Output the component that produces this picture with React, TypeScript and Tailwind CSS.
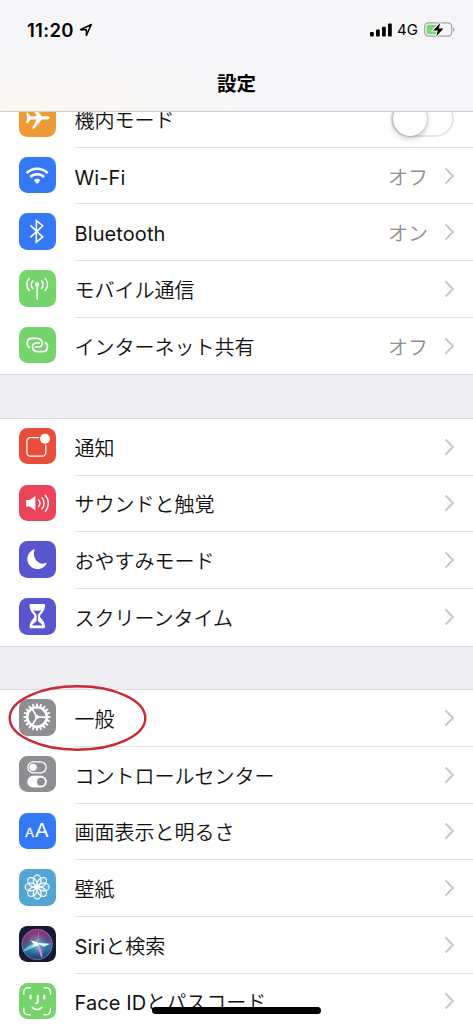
import type { ReactNode } from 'react';

type Item = {
  label: string;
  tile: string;
  icon: ReactNode;
  value?: string;
  toggle?: boolean;
};

const stroke = { fill: 'none', stroke: '#fff', strokeLinecap: 'round', strokeLinejoin: 'round' } as const;

const Airplane = () => (
  <path
    d="M7.3 12.700h1.4l3 3.700 6.200.1-4.900-9.600h2.600l7.500 9.600h5.200c1.500 0 3 .7 3 1.600s-1.500 1.600-3 1.600h-5.200L15.600 28.900H13l4.900-9.200-6.200.1-3 3.700H7.300l1-5.400Z"
    fill="#fff"
  />
);

const Wifi = () => (
  <g {...stroke} strokeLinecap="butt">
    <path d="M7.700 16.300a15.300 15.300 0 0 1 21.400 0" strokeWidth="2.700" />
    <path d="M11.500 20.300a9.900 9.900 0 0 1 13.800 0" strokeWidth="2.700" />
    <path d="M18.400 27.300l-3.300-3.700a4.900 4.900 0 0 1 6.600 0Z" fill="#fff" stroke="none" />
  </g>
);

const Bluetooth = () => (
  <path d="M11.500 12.600l12.600 11.600-6.500 5.300V7.700l6.500 5.200-12.600 11.800" {...stroke} strokeWidth="1.600" strokeLinejoin="miter" strokeLinecap="butt" />
);

const Antenna = () => (
  <g {...stroke} strokeWidth="1.500">
    <circle cx="18.400" cy="14.800" r="2.300" fill="#fff" stroke="none" />
    <path d="M18.400 15v14.500M14 11a5.500 5.500 0 0 0 0 7.800M22.800 11a5.500 5.500 0 0 1 0 7.800M10.300 8.700a9.100 9.100 0 0 0 0 12.200M26.500 8.700a9.100 9.100 0 0 1 0 12.200" />
  </g>
);

const Hotspot = () => (
  <g {...stroke} strokeWidth="1.700">
    <path d="M10.500 20.800c-3.700-2.600-2.600-9.200 2.600-9.200h4.800c6.700 0 7.600 8.700 1.800 8.700h-3" />
    <path d="M26.700 15.700c3.700 2.600 2.600 9.200-2.600 9.200h-4.800c-6.700 0-7.600-8.700-1.800-8.700h3" />
  </g>
);

const Notification = () => (
  <g>
    <path d="M20 9.700h-8.400a3.600 3.600 0 0 0-3.600 3.600v11.600a3.600 3.600 0 0 0 3.600 3.600h12a3.600 3.600 0 0 0 3.600-3.600V17.200" {...stroke} strokeWidth="1.200" />
    <circle cx="26.300" cy="10.900" r="5" fill="#fff" />
  </g>
);

const Speaker = () => (
  <g>
    <path d="M7.200 15.300h3.700l5.700-4.200v14.800l-5.700-4.200H7.200Z" fill="#fff" />
    <path d="M19.900 15.300c1.700 1.900 1.700 4.500 0 6.400M23.200 12.800c3 3.200 3 8.200 0 11.400M26.600 10.400c4.200 4.600 4.200 11.600 0 16.200" {...stroke} strokeWidth="1.400" />
  </g>
);

const Moon = () => (
  <path d="M16.100 8.200A10.300 10.300 0 1 0 28.400 21.800c-7.600 4.400-16.400-4.700-12.300-13.600Z" fill="#fff" />
);

const Hourglass = () => (
  <g>
    <path
      d="M11.500 6.200h14c1 0 1 1.400.7 2.800-.6 4.300-3.100 6.400-4.500 8.300-.5.800-.5 1.700 0 2.500 1.400 1.900 4.200 4.200 4.500 8.200.2 1.700 0 2.700-.7 2.700h-14c-.8 0-.9-1-.7-2.700.3-4 3.100-6.300 4.500-8.200.5-.8.5-1.700 0-2.500-1.400-1.900-3.900-4-4.500-8.300-.3-1.400-.3-2.800.7-2.800Z"
      fill="#fff"
    />
    <path d="M14.300 12.100c1.400.9 2.700.7 4.200.7s2.800.2 4.200-.7c-.6 1.800-3.400 3.900-3.500 5.200v5.500c.2 1.800 3.700 2.500 4.400 5.100H13.400c.7-2.600 4.200-3.300 4.400-5.100v-5.500c-.1-1.300-2.900-3.400-3.500-5.200Z" fill="#5856ce" />
  </g>
);

const teeth = Array.from({ length: 20 }, (_, i) => i * 18);

const Gear = () => (
  <g {...stroke} strokeLinecap="butt">
    <circle cx="18.200" cy="18.300" r="9.800" strokeWidth="2.400" />
    {teeth.map((angle) => (
      <path key={angle} d="M16.900 8.500l.5-4h1.600l.5 4Z" fill="#fff" stroke="none" transform={`rotate(${angle} 18.2 18.3)`} />
    ))}
    <circle cx="18.200" cy="18.300" r="2" fill="#fff" stroke="none" />
    <path d="M18.200 18.300h9.500M18.200 18.300l-4.800-8.300M18.200 18.300l-4.800 8.300" strokeWidth="1.700" />
  </g>
);

const Switches = () => (
  <g>
    <rect x="9" y="6" width="18.600" height="11" rx="5.500" fill="none" stroke="#fff" strokeWidth="1.300" />
    <circle cx="14.300" cy="11.500" r="3.700" fill="#fff" />
    <rect x="8.400" y="20" width="19.800" height="12" rx="6" fill="#fff" />
    <circle cx="22.300" cy="26" r="4" fill="#8e8e93" />
  </g>
);

const Letters = () => (
  <g fill="#fff" fontFamily="Liberation Sans">
    <text x="6.400" y="24.500" fontSize="13" fontWeight="400" stroke="#fff" strokeWidth=".3">A</text>
    <text x="16.300" y="24.500" fontSize="20.500" fontWeight="400">A</text>
  </g>
);

const petals = [0, 45, 90, 135, 180, 225, 270, 315];

const Flower = () => (
  <g fill="#fff" fillOpacity=".1" stroke="#fff" strokeWidth="1.200">
    {petals.map((angle) => (
      <ellipse key={angle} cx="18.400" cy="11.600" rx="3.900" ry="5.600" transform={`rotate(${angle} 18.4 18.2)`} />
    ))}
    <circle cx="18.400" cy="18.200" r="2.500" fill="none" strokeWidth=".8" />
  </g>
);

const Siri = () => (
  <g>
    <defs>
      <radialGradient id="orb">
        <stop offset="0" stopColor="#d9fbff" />
        <stop offset=".3" stopColor="#65b4c8" stopOpacity=".8" />
        <stop offset="1" stopColor="#356fac" stopOpacity="0" />
      </radialGradient>
      <linearGradient id="orbBase" x1=".4" y1="0" x2=".5" y2="1">
        <stop offset="0" stopColor="#a32b72" />
        <stop offset=".4" stopColor="#6a417f" />
        <stop offset=".65" stopColor="#2675a0" />
        <stop offset="1" stopColor="#28356f" />
      </linearGradient>
    </defs>
    <circle cx="18.400" cy="18.700" r="15.500" fill="url(#orbBase)" stroke="#8183a6" strokeWidth=".8" />
    <circle cx="18.400" cy="18.700" r="12.500" fill="url(#orb)" />
    <path d="M18.400 17.500C13 18 7 21 4 26c7-2 12-5 14.400-8.500Z" fill="#73e1df" fillOpacity=".8" />
    <path d="M18 18c1.500 6 3 11 5.500 15 .8-6-1-11-5.500-15Z" fill="#e889df" fillOpacity=".9" />
    <path d="M18 17l14 1-7 3Z" fill="#d0fff2" />
    <path d="M20 4l.3 13L18 19Z" fill="#d77ea8" fillOpacity=".8" />
    <path d="M11.500 14.500l7 2 2 3-6 1.500-3 2.500 4-5Z" fill="#fff" />
  </g>
);

const Face = () => (
  <g {...stroke} strokeWidth="1.500">
    <path d="M4.800 11.300V9a4.200 4.200 0 0 1 4.200-4.200h2.500M25.200 4.800h2.500A4.200 4.200 0 0 1 31.900 9v2.300M31.900 25.700V28a4.200 4.200 0 0 1-4.200 4.200h-2.500M11.500 32.200H9A4.200 4.200 0 0 1 4.800 28v-2.300" />
    <path d="M11.700 12.800v2.800M25.600 12.800v2.800" strokeWidth="2.300" />
    <path d="M19 12.800v6.300c0 1.200-.7 1.500-1.800 1.500M13.700 24.800c2.800 2.600 6.600 2.600 9.400 0" strokeWidth="1.900" />
  </g>
);

const groups: Item[][] = [
  [
    { label: '機内モード', tile: 'bg-[#f09a37]', icon: <Airplane />, toggle: true },
    { label: 'Wi-Fi', tile: 'bg-[#3478f6]', icon: <Wifi />, value: 'オフ' },
    { label: 'Bluetooth', tile: 'bg-[#3478f6]', icon: <Bluetooth />, value: 'オン' },
    { label: 'モバイル通信', tile: 'bg-[#75d56c]', icon: <Antenna /> },
    { label: 'インターネット共有', tile: 'bg-[#75d56c]', icon: <Hotspot />, value: 'オフ' },
  ],
  [
    { label: '通知', tile: 'bg-[#e94e3d]', icon: <Notification /> },
    { label: 'サウンドと触覚', tile: 'bg-[#ea445a]', icon: <Speaker /> },
    { label: 'おやすみモード', tile: 'bg-[#5856ce]', icon: <Moon /> },
    { label: 'スクリーンタイム', tile: 'bg-[#5856ce]', icon: <Hourglass /> },
  ],
  [
    { label: '一般', tile: 'bg-[#8e8e93]', icon: <Gear /> },
    { label: 'コントロールセンター', tile: 'bg-[#8e8e93]', icon: <Switches /> },
    { label: '画面表示と明るさ', tile: 'bg-[#3478f6]', icon: <Letters /> },
    { label: '壁紙', tile: 'bg-[#54a5d4]', icon: <Flower /> },
    { label: 'Siriと検索', tile: 'bg-[#161a36]', icon: <Siri /> },
    { label: 'Face IDとパスコード', tile: 'bg-[#75d56c]', icon: <Face /> },
  ],
];

function Toggle() {
  return (
    <div className="mr-[19px] flex h-[37px] w-[63px] items-center rounded-full border-2 border-[#e5e5e5] bg-white">
      <div className="size-[34px] shrink-0 rounded-full bg-white shadow-[0_2px_6px_rgba(0,0,0,0.25),0_0_2px_rgba(0,0,0,0.25)]" />
    </div>
  );
}

// Latin runs are set a little heavier than the Japanese text beside them.
function Label({ text }: { text: string }) {
  const parts = text.split(/([A-Za-z][A-Za-z -]*)/).filter(Boolean);
  return (
    <span className="flex-1 pt-[4px] text-[20px] leading-7 whitespace-nowrap text-[#111]">
      {parts.map((part) =>
        /^[A-Za-z]/.test(part) ? (
          <span key={part} className="font-normal tracking-[0.1px]">{part}</span>
        ) : (
          part
        ),
      )}
    </span>
  );
}

function Row({ item, last }: { item: Item; last: boolean }) {
  return (
    <div className="flex h-[56.7px] shrink-0 pl-[19px]">
      <div className={`mt-[9px] size-[36.500px] shrink-0 overflow-hidden rounded-[8.500px] ${item.tile}`}>
        <svg viewBox="0 0 37 37" className="size-full">{item.icon}</svg>
      </div>
      <div className={`ml-[19px] flex flex-1 items-center border-b ${last ? 'border-transparent' : 'border-[#e2e2e4]'}`}>
        <Label text={item.label} />
        {item.toggle ? (
          <Toggle />
        ) : (
          <>
            {item.value && <span className="mr-[16px] pt-[4px] text-[20px] leading-7 text-[#8e8e93]">{item.value}</span>}
            <svg viewBox="0 0 11 18" className="mr-[18px] h-[18px] w-[11px]">
              <path d="M1.500 1.500 9 9l-7.500 7.500" fill="none" stroke="#c7c7cc" strokeWidth="2" />
            </svg>
          </>
        )}
      </div>
    </div>
  );
}

function StatusBar() {
  return (
    <div className="flex h-[59px] items-center justify-between pr-[17px] pl-[27px]">
      <div className="flex items-center gap-[5px]">
        <span className="text-[18.500px] leading-6 font-semibold tracking-[0.3px]">11:20</span>
        <svg viewBox="0 0 14 14" className="size-[14px]">
          <path d="M1.500 6.700 12.300 1.500 7.400 12.500V6.800Z" fill="none" stroke="#000" strokeWidth="1.500" strokeLinejoin="round" />
        </svg>
      </div>
      <div className="flex items-center">
        <svg viewBox="0 0 22 14" className="h-[14px] w-[22px]">
          <rect x="0" y="9" width="3.800" height="4.500" rx="1" />
          <rect x="6" y="6.500" width="3.800" height="7" rx="1" />
          <rect x="12" y="3.800" width="3.800" height="9.700" rx="1" />
          <rect x="18" y=".5" width="3.800" height="13" rx="1" />
        </svg>
        <span className="ml-[5px] text-[15px] leading-6 font-normal">4G</span>
        <svg viewBox="0 0 32 15" className="ml-[6px] h-[15px] w-[32px]">
          <rect x=".7" y=".9" width="27" height="13.200" rx="3.800" fill="none" stroke="#a2a2a5" strokeWidth="1.200" />
          <path d="M5 2.700h9.500v9.600H5a2.400 2.400 0 0 1-2.400-2.400V5.100A2.400 2.400 0 0 1 5 2.700Z" fill="#77d572" />
          <path d="M29.200 5.200c1.900.8 1.900 3.800 0 4.600Z" fill="#a2a2a5" />
          <path d="M16.300.7 9.200 8.400h4.600L12.400 14.200 19.400 6.400h-4.700Z" stroke="#f6f6f8" strokeWidth="2.200" paintOrder="stroke" />
        </svg>
      </div>
    </div>
  );
}

export default function App() {
  return (
    <div className="relative flex h-[1024px] w-[473px] flex-col overflow-hidden bg-[#eeeef3] font-['Inter','Noto_Sans_CJK_JP',sans-serif] text-black">
      <header className="z-10 h-[112px] shrink-0 border-b border-[#d0d0d3] bg-[#f6f6f8] bg-radial-[at_5%_100%] from-[#faf6ef] to-[#f6f6f8] to-35%">
        <StatusBar />
        <h1 className="mt-[11px] text-center text-[19.500px] leading-7 font-bold">設定</h1>
      </header>
      <main className="-mt-[22px] flex flex-col gap-[42.500px]">
        {groups.map((group, index) => (
          <section key={index} className="flex flex-col border-y border-[#d9d9dd] bg-white font-[350]">
            {group.map((item, i) => (
              <Row key={item.label} item={item} last={i === group.length - 1} />
            ))}
          </section>
        ))}
      </main>
      <svg viewBox="0 0 140 68" className="absolute top-[684px] left-[8px] h-[68px] w-[140px]">
        <ellipse cx="69.500" cy="34" rx="67.800" ry="31.700" fill="none" stroke="#cc2936" strokeWidth="2.400" />
      </svg>
      <div className="absolute top-[1007px] left-[152px] h-[7px] w-[169px] rounded-full bg-black" />
    </div>
  );
}
